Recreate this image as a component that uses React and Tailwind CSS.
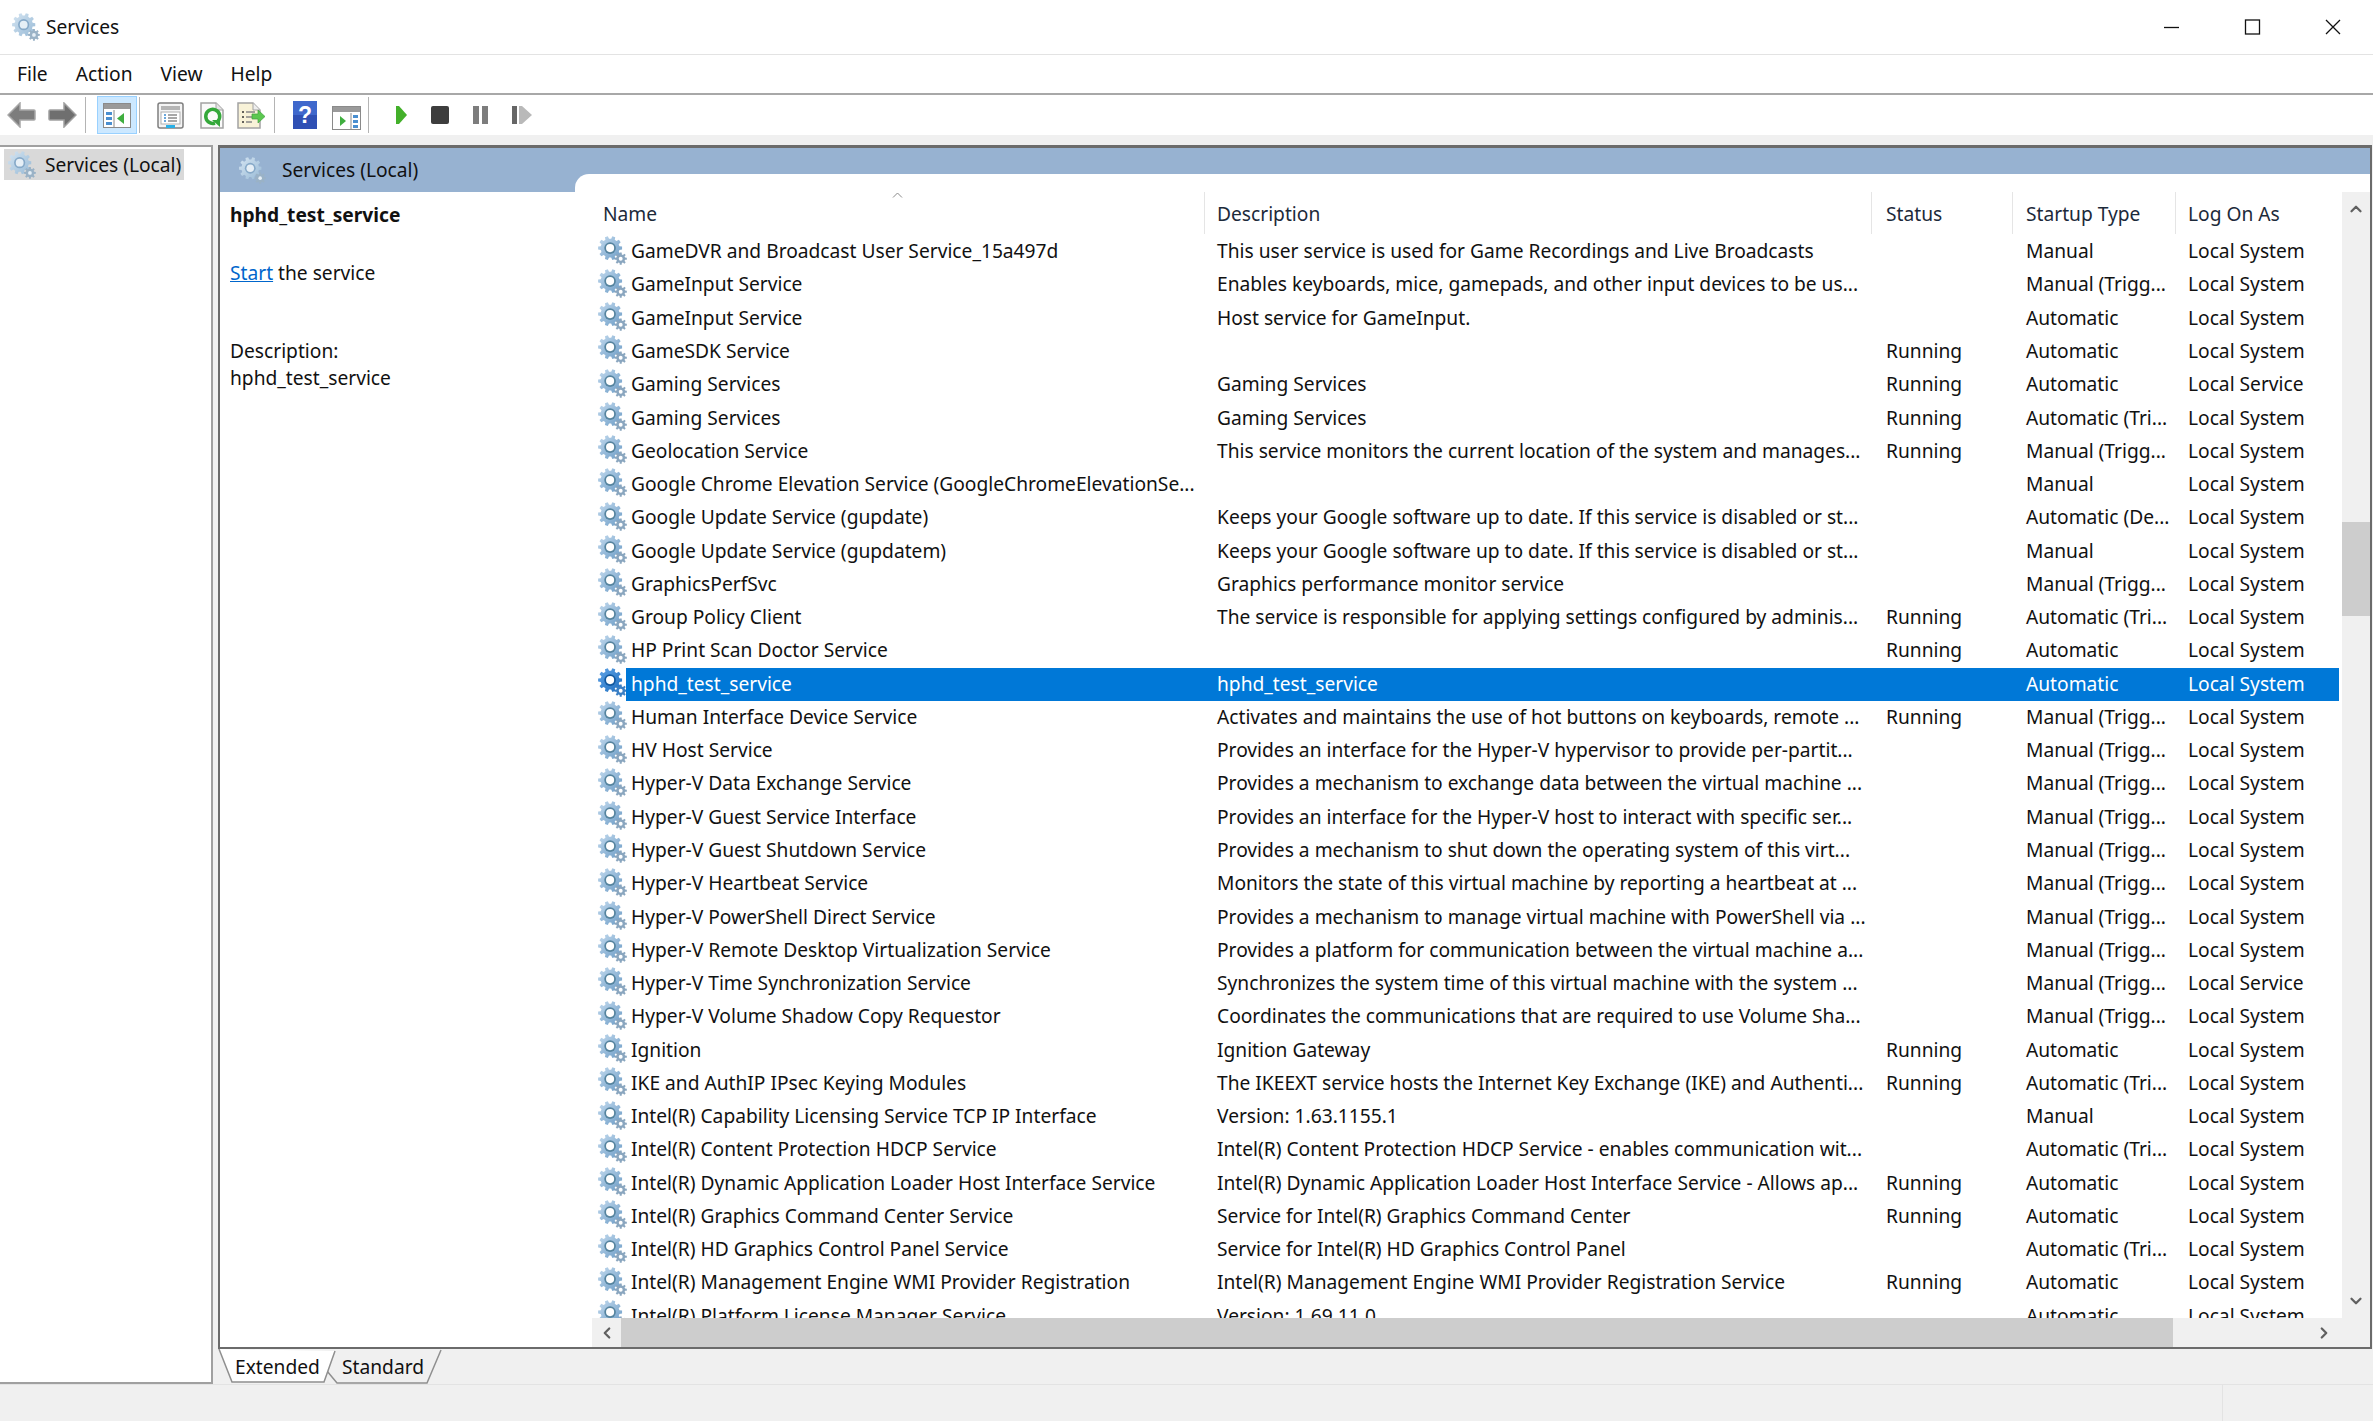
import { ChevronUp, ChevronDown, ChevronLeft, ChevronRight } from "lucide-react";

const LS = "Local System";
const KEEPS = "Keeps your Google software up to date. If this service is disabled or st...";
const MT = "Manual (Trigg...";
const AT = "Automatic (Tri...";

const SERVICES = [
  ["GameDVR and Broadcast User Service_15a497d", "This user service is used for Game Recordings and Live Broadcasts", "", "Manual", LS],
  ["GameInput Service", "Enables keyboards, mice, gamepads, and other input devices to be us...", "", MT, LS],
  ["GameInput Service", "Host service for GameInput.", "", "Automatic", LS],
  ["GameSDK Service", "", "Running", "Automatic", LS],
  ["Gaming Services", "Gaming Services", "Running", "Automatic", "Local Service"],
  ["Gaming Services", "Gaming Services", "Running", AT, LS],
  ["Geolocation Service", "This service monitors the current location of the system and manages...", "Running", MT, LS],
  ["Google Chrome Elevation Service (GoogleChromeElevationSe...", "", "", "Manual", LS],
  ["Google Update Service (gupdate)", KEEPS, "", "Automatic (De...", LS],
  ["Google Update Service (gupdatem)", KEEPS, "", "Manual", LS],
  ["GraphicsPerfSvc", "Graphics performance monitor service", "", MT, LS],
  ["Group Policy Client", "The service is responsible for applying settings configured by adminis...", "Running", AT, LS],
  ["HP Print Scan Doctor Service", "", "Running", "Automatic", LS],
  ["hphd_test_service", "hphd_test_service", "", "Automatic", LS],
  ["Human Interface Device Service", "Activates and maintains the use of hot buttons on keyboards, remote ...", "Running", MT, LS],
  ["HV Host Service", "Provides an interface for the Hyper-V hypervisor to provide per-partit...", "", MT, LS],
  ["Hyper-V Data Exchange Service", "Provides a mechanism to exchange data between the virtual machine ...", "", MT, LS],
  ["Hyper-V Guest Service Interface", "Provides an interface for the Hyper-V host to interact with specific ser...", "", MT, LS],
  ["Hyper-V Guest Shutdown Service", "Provides a mechanism to shut down the operating system of this virt...", "", MT, LS],
  ["Hyper-V Heartbeat Service", "Monitors the state of this virtual machine by reporting a heartbeat at ...", "", MT, LS],
  ["Hyper-V PowerShell Direct Service", "Provides a mechanism to manage virtual machine with PowerShell via ...", "", MT, LS],
  ["Hyper-V Remote Desktop Virtualization Service", "Provides a platform for communication between the virtual machine a...", "", MT, LS],
  ["Hyper-V Time Synchronization Service", "Synchronizes the system time of this virtual machine with the system ...", "", MT, "Local Service"],
  ["Hyper-V Volume Shadow Copy Requestor", "Coordinates the communications that are required to use Volume Sha...", "", MT, LS],
  ["Ignition", "Ignition Gateway", "Running", "Automatic", LS],
  ["IKE and AuthIP IPsec Keying Modules", "The IKEEXT service hosts the Internet Key Exchange (IKE) and Authenti...", "Running", AT, LS],
  ["Intel(R) Capability Licensing Service TCP IP Interface", "Version: 1.63.1155.1", "", "Manual", LS],
  ["Intel(R) Content Protection HDCP Service", "Intel(R) Content Protection HDCP Service - enables communication wit...", "", AT, LS],
  ["Intel(R) Dynamic Application Loader Host Interface Service", "Intel(R) Dynamic Application Loader Host Interface Service - Allows ap...", "Running", "Automatic", LS],
  ["Intel(R) Graphics Command Center Service", "Service for Intel(R) Graphics Command Center", "Running", "Automatic", LS],
  ["Intel(R) HD Graphics Control Panel Service", "Service for Intel(R) HD Graphics Control Panel", "", AT, LS],
  ["Intel(R) Management Engine WMI Provider Registration", "Intel(R) Management Engine WMI Provider Registration Service", "Running", "Automatic", LS],
  ["Intel(R) Platform License Manager Service", "Version: 1.69.11.0", "", "Automatic", LS],
];

function gearPath(cx, cy, outer, root, teeth) {
  const pts = [];
  const step = (Math.PI * 2) / teeth;
  for (let i = 0; i < teeth; i++) {
    const a = i * step;
    [[-0.32, root], [-0.2, outer], [0.2, outer], [0.32, root]].forEach(([k, r]) => {
      pts.push(`${(cx + Math.cos(a + k * step) * r).toFixed(2)} ${(cy + Math.sin(a + k * step) * r).toFixed(2)}`);
    });
  }
  return `M${pts.join("L")}Z`;
}

function Gear({ size = 29, selected = false, pale = false }) {
  const id = selected ? "gear-sel" : pale ? "gear-pale" : "gear-norm";
  const top = selected ? "#5fa3e6" : pale ? "#d5e5f2" : "#c3daee";
  const bottom = selected ? "#1f6fc0" : pale ? "#98bad6" : "#6c9cc6";
  return (
    <svg width={size} height={size} viewBox="0 0 30 30" className="shrink-0">
      <defs>
        <linearGradient id={id} x1="0" y1="0" x2="1" y2="1">
          <stop offset="0" stopColor={top} />
          <stop offset="1" stopColor={bottom} />
        </linearGradient>
      </defs>
      <path d={gearPath(12.5, 12.5, 12.5, 9.8, 10)} fill={`url(#${id})`} />
      <circle cx="12.5" cy="12.5" r="6" fill={pale ? "#86a9c8" : selected ? "#12589e" : "#56849f"} />
      <circle cx="12.5" cy="12.5" r="4.2" fill={pale ? "#e6eff6" : "#fff"} />
      <path d={gearPath(23.5, 23.5, 6.4, 4.6, 8)} fill={pale ? "#9ab2c6" : selected ? "#3a7fc4" : "#8aa6bf"} />
      <circle cx="23.5" cy="23.5" r="2" fill={pale ? "#e6eff6" : "#fff"} />
    </svg>
  );
}

function Separator({ ml, mr }) {
  return <div className={`h-[36px] w-[1px] bg-[#b4b4b4] ${ml} ${mr}`} />;
}

function Toolbar() {
  return (
    <div className="h-[40px] bg-white flex items-center pl-[7px]">
      {/* back / forward */}
      <svg width="29" height="26" viewBox="0 0 29 26">
        <path d="M13 1L1 13l12 12v-7h14a1 1 0 0 0 1-1V9a1 1 0 0 0-1-1H13z" fill="#7d7d7d" stroke="#a8a8a8" strokeWidth="1.5" />
      </svg>
      <svg className="ml-[12px]" width="29" height="26" viewBox="0 0 29 26">
        <path d="M16 1l12 12-12 12v-7H2a1 1 0 0 1-1-1V9a1 1 0 0 1 1-1h14z" fill="#6f6f6f" stroke="#a0a0a0" strokeWidth="1.5" />
      </svg>
      <Separator ml="ml-[8px]" mr="mr-[11px]" />
      {/* show/hide tree, pressed */}
      <div className="w-[40px] h-[38px] bg-[#cce8ff] border border-[#99d1ff] flex items-center justify-center">
        <svg width="28" height="25" viewBox="0 0 28 25">
          <rect x="0.5" y="0.5" width="27" height="24" fill="#fff" stroke="#8a8a8a" />
          <rect x="1" y="1" width="26" height="5" fill="#9a9a9a" />
          <rect x="3" y="9" width="6" height="3" fill="#4a8fd0" />
          <rect x="3" y="14" width="6" height="3" fill="#4a8fd0" />
          <rect x="3" y="19" width="6" height="3" fill="#4a8fd0" />
          <path d="M11 7v17" stroke="#8a8a8a" />
          <path d="M21 10v11l-7-5.500z" fill="#3fae3f" />
        </svg>
      </div>
      <Separator ml="ml-[2px]" mr="mr-[17px]" />
      {/* properties */}
      <svg width="27" height="27" viewBox="0 0 27 27">
        <rect x="1" y="1" width="25" height="25" rx="2" fill="#f4f4f4" stroke="#7f7f7f" strokeWidth="1.5" />
        <rect x="4" y="4" width="19" height="4" fill="#b5b5b5" />
        <rect x="4" y="10" width="19" height="12" fill="#fff" stroke="#b0b0b0" />
        <path d="M7 13h2M7 16h2M7 19h2" stroke="#3b8ad0" strokeWidth="1.5" />
        <path d="M11 13h9M11 16h9M11 19h9" stroke="#8a8a8a" strokeWidth="1.5" />
        <rect x="9" y="23" width="9" height="3" fill="#2ab0e6" />
      </svg>
      {/* refresh */}
      <svg className="ml-[16px]" width="24" height="27" viewBox="0 0 24 27">
        <path d="M1 1h15l7 7v18H1z" fill="#fafafa" stroke="#a3a3a3" strokeWidth="1.5" />
        <path d="M16 1v7h7" fill="#e4e4e4" stroke="#a3a3a3" />
        <path d="M18 19a7 7 0 1 0-3 2" fill="none" stroke="#34a83a" strokeWidth="3.500" />
        <path d="M12 18h8v7z" fill="#34a83a" />
      </svg>
      {/* export list */}
      <svg className="ml-[13px]" width="29" height="27" viewBox="0 0 29 27">
        <path d="M1 1h15l7 7v18H1z" fill="#f8f2d8" stroke="#a3a3a3" strokeWidth="1.5" />
        <path d="M16 1v7h7" fill="#eee" stroke="#a3a3a3" />
        <path d="M5 10h2M5 15h2M5 20h2" stroke="#333" strokeWidth="1.5" />
        <path d="M9 10h9M9 15h6M9 20h6" stroke="#888" strokeWidth="1.5" />
        <path d="M15 12h6V8l7 6.500-7 6.500v-4h-6z" fill="#5cc850" stroke="#3fa03f" strokeWidth="0.7" />
      </svg>
      <Separator ml="ml-[8px]" mr="mr-[18px]" />
      {/* help */}
      <svg width="24" height="28" viewBox="0 0 24 28">
        <rect width="24" height="28" fill="#2f50b4" />
        <rect x="0" y="0" width="24" height="14" fill="#3f68cc" />
        <text x="12" y="22" textAnchor="middle" fontSize="23" fontWeight="700" fontFamily="Liberation Sans, sans-serif" fill="#fff">?</text>
      </svg>
      {/* action pane */}
      <svg className="ml-[15px] mt-[5px]" width="29" height="24" viewBox="0 0 29 24">
        <rect x="0.5" y="0.5" width="28" height="23" fill="#fff" stroke="#8a8a8a" />
        <rect x="1" y="1" width="27" height="5" fill="#9a9a9a" />
        <path d="M19 7v16" stroke="#8a8a8a" />
        <rect x="21" y="9" width="5" height="3" fill="#4a8fd0" />
        <rect x="21" y="14" width="5" height="3" fill="#4a8fd0" />
        <rect x="21" y="19" width="5" height="3" fill="#4a8fd0" />
        <path d="M8 10v10l6-5z" fill="#3fae3f" />
      </svg>
      <Separator ml="ml-[7px]" mr="mr-[27px]" />
      {/* play / stop / pause / resume */}
      <svg width="11" height="18" viewBox="0 0 11 18">
        <path d="M0 0h3l8 9-8 9H0z" fill="#43b02a" />
      </svg>
      <div className="ml-[24px] w-[18px] h-[18px] rounded-[2px] bg-[#3d3d3d]" />
      <div className="ml-[24px] flex gap-[3px]">
        <div className="w-[6px] h-[18px] bg-[#7d7d7d]" />
        <div className="w-[6px] h-[18px] bg-[#7d7d7d]" />
      </div>
      <div className="ml-[24px] flex items-center gap-[2px]">
        <div className="w-[5px] h-[18px] bg-[#666]" />
        <svg width="13" height="18" viewBox="0 0 13 18">
          <path d="M0 0h3l10 9-10 9H0z" fill="#b9b9b9" />
        </svg>
      </div>
    </div>
  );
}

function ColHead({ label, className, hasLine = true }) {
  return (
    <div className={`h-[42px] flex items-center pt-[2px] text-[#1c2a3a] ${hasLine ? "border-r border-[#e5e5e5]" : ""} ${className}`}>
      {label}
    </div>
  );
}

function ServiceRow({ row, selected }) {
  const [name, desc, status, startup, logon] = row;
  return (
    <div className="flex h-[33.28px] items-center whitespace-nowrap">
      <div className="w-[34px] h-full flex items-center pl-[6px] -mt-[3px]">
        <Gear selected={selected} />
      </div>
      <div className={`w-[1713px] h-[33px] flex items-center ${selected ? "bg-[#0078d7] text-white" : "text-[#111]"}`}>
        <div className="w-[579px] pl-[5px]">{name}</div>
        <div className="w-[667px] pl-[12px]">{desc}</div>
        <div className="w-[141px] pl-[14px]">{status}</div>
        <div className="w-[163px] pl-[13px]">{startup}</div>
        <div className="w-[163px] pl-[12px]">{logon}</div>
      </div>
    </div>
  );
}

function ServiceList() {
  return (
    <div className="flex-1 flex flex-col min-w-0 bg-white">
      <div className="h-[26px] bg-[#97b2d1]" />
      <div className="h-[18px]" />
      <div className="flex flex-1 min-h-0">
        <div className="flex-1 min-w-0 overflow-hidden">
          <div className="flex h-[43px] relative">
            <ColHead label="Name" className="w-[613px] pl-[11px]" />
            <ColHead label="Description" className="w-[667px] pl-[12px]" />
            <ColHead label="Status" className="w-[141px] pl-[14px]" />
            <ColHead label="Startup Type" className="w-[163px] pl-[13px]" />
            <ColHead label="Log On As" className="w-[163px] pl-[12px]" hasLine={false} />
            <svg className="absolute left-[300px] top-0" width="11" height="6" viewBox="0 0 11 6">
              <path d="M1 5.500l4.500-4.500 4.500 4.500" fill="none" stroke="#8a8a8a" />
            </svg>
          </div>
          {SERVICES.map((row, i) => (
            <ServiceRow key={i} row={row} selected={i === 13} />
          ))}
        </div>
        {/* vertical scrollbar */}
        <div className="w-[28px] bg-[#f0f0f0] flex flex-col items-center justify-between py-[8px] relative">
          <ChevronUp size={18} strokeWidth={3} className="text-[#606060]" />
          <div className="absolute left-0 top-[330px] w-full h-[94px] bg-[#cdcdcd]" />
          <ChevronDown size={18} strokeWidth={3} className="text-[#606060]" />
        </div>
      </div>
      {/* horizontal scrollbar */}
      <div className="h-[29px] bg-[#f0f0f0] flex items-center">
        <div className="w-[29px] flex justify-center">
          <ChevronLeft size={18} strokeWidth={3} className="text-[#606060]" />
        </div>
        <div className="w-[1552px] h-full bg-[#cdcdcd]" />
        <div className="flex-1 flex justify-end pr-[37px]">
          <ChevronRight size={18} strokeWidth={3} className="text-[#606060]" />
        </div>
      </div>
    </div>
  );
}

function DetailPanel() {
  return (
    <div className="w-[372px] shrink-0 flex flex-col bg-white">
      <div className="flex">
        <div className="w-[355px] h-[44px] bg-[#97b2d1] flex items-center pl-[19px] gap-[16px] text-[#111]">
          <Gear size={27} pale />
          <span>Services (Local)</span>
        </div>
        <div className="flex-1 h-[44px] bg-[#97b2d1]">
          <div className="mt-[26px] h-[18px] bg-white rounded-tl-[14px]" />
        </div>
      </div>
      <div className="pl-[10px] pt-[10px] text-[#111]">
        <div className="font-bold leading-[26px]">hphd_test_service</div>
        <div className="mt-[32px] leading-[26px]">
          <span className="text-[#0066cc] underline">Start</span> the service
        </div>
        <div className="mt-[52px] leading-[26.500px]">Description:</div>
        <div className="leading-[26.500px]">hphd_test_service</div>
      </div>
    </div>
  );
}

function Tabs() {
  return (
    <div className="h-[35px] flex relative">
      <svg className="absolute left-0 top-0" width="225" height="35" viewBox="0 0 225 35">
        <path d="M109 22L119 34H209L223 1" fill="#f0f0f0" stroke="#8f8f8f" strokeWidth="1.5" />
        <path d="M1 0L14 33H106L117 2Z" fill="#fff" />
        <path d="M1 0L14 33H106L117 2" fill="none" stroke="#8f8f8f" strokeWidth="1.5" />
      </svg>
      <div className="relative pl-[17px] pt-[2px] w-[124px] flex items-center text-[#111]">Extended</div>
      <div className="relative pt-[2px] flex items-center text-[#111]">Standard</div>
    </div>
  );
}

export default function App() {
  return (
    <div
      className="w-[2373px] h-[1421px] flex flex-col bg-[#f0f0f0] text-[19.2px] overflow-hidden"
      style={{ fontFamily: '"Noto Sans", sans-serif' }}
    >
      {/* title bar */}
      <div className="h-[55px] shrink-0 bg-white border-b border-[#e3e3e3] flex items-center pl-[12px]">
        <Gear size={28} pale />
        <span className="ml-[6px] text-[#111]">Services</span>
        <svg width="177" height="16" viewBox="0 0 177 16" className="ml-auto mr-[32px]">
          <path d="M0 8.500h15" stroke="#111" strokeWidth="1.3" />
          <rect x="81.500" y="1" width="14" height="14" fill="none" stroke="#111" strokeWidth="1.3" />
          <path d="M162 1l14 14M176 1l-14 14" stroke="#111" strokeWidth="1.3" />
        </svg>
      </div>

      {/* menu bar */}
      <div className="h-[40px] shrink-0 bg-white border-b-[2px] border-[#a8a8a8] flex items-center pl-[17px] gap-[28px] text-[#111]">
        <span>File</span>
        <span>Action</span>
        <span>View</span>
        <span>Help</span>
      </div>

      <Toolbar />

      <div className="h-[10px] shrink-0" />

      <div className="flex-1 min-h-0 flex">
        {/* tree */}
        <div className="w-[213px] shrink-0 h-[1239px] bg-white border-2 border-l-0 border-[#a0a0a0] pl-[4px] pt-[2px]">
          <div className="w-[180px] h-[31px] bg-[#d9d9d9] flex items-center pl-[4px] pt-[1px] gap-[9px] text-[#111] whitespace-nowrap">
            <Gear size={28} pale />
            <span>Services (Local)</span>
          </div>
        </div>

        {/* result pane */}
        <div className="flex-1 min-w-0 flex flex-col ml-[5px] mr-[1px]">
          <div className="h-[1204px] shrink-0 flex border-2 border-t-[3px] border-[#6b6b6b] bg-white">
            <DetailPanel />
            <ServiceList />
          </div>
          <Tabs />
        </div>
      </div>

      {/* status bar */}
      <div className="h-[37px] shrink-0 border-t border-[#e3e3e3] flex justify-end">
        <div className="w-[151px] border-l border-[#e3e3e3]" />
      </div>
    </div>
  );
}
